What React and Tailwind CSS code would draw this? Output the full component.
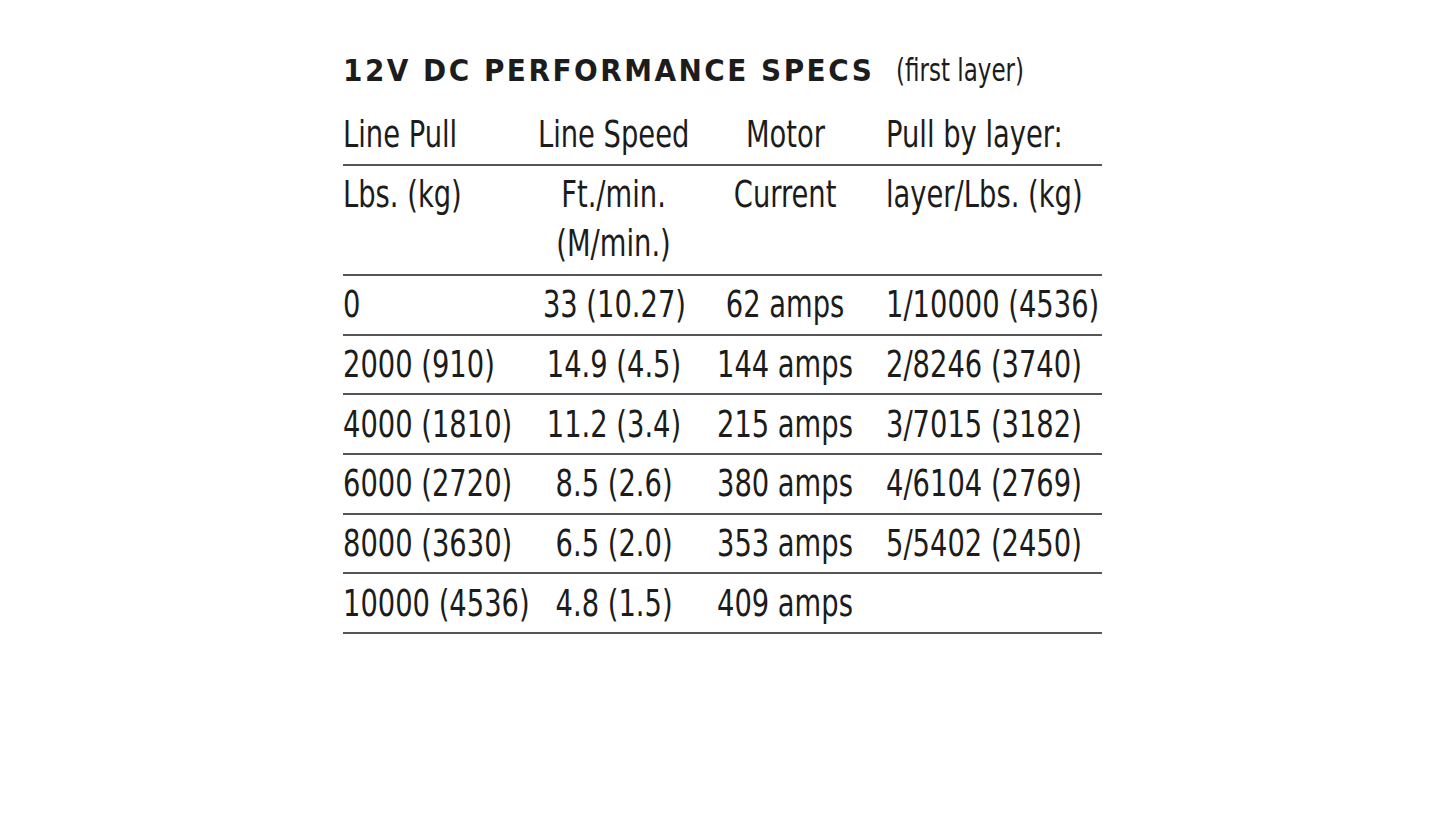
import React from 'react';

const rows = [
  ["0", "33 (10.27)", "62 amps", "1/10000 (4536)"],
  ["2000 (910)", "14.9 (4.5)", "144 amps", "2/8246 (3740)"],
  ["4000 (1810)", "11.2 (3.4)", "215 amps", "3/7015 (3182)"],
  ["6000 (2720)", "8.5 (2.6)", "380 amps", "4/6104 (2769)"],
  ["8000 (3630)", "6.5 (2.0)", "353 amps", "5/5402 (2450)"],
  ["10000 (4536)", "4.8 (1.5)", "409 amps", ""],
];

const cols = "grid grid-cols-[196px_150px_192px_221px]";

// condensed text: squeeze horizontally, since no narrow face is installed
const Left = ({ children }) => (
  <div className="flex whitespace-nowrap">
    <span className="inline-block origin-left scale-x-[0.8]">{children}</span>
  </div>
);

const Center = ({ children }) => (
  <div className="flex justify-center whitespace-nowrap">
    <span className="inline-block origin-center scale-x-[0.8] text-center">{children}</span>
  </div>
);

const App = () => {
  return (
    <div className="min-h-[813px] bg-white text-[#1c1c1c] font-['DejaVu_Sans_Condensed','DejaVu_Sans',sans-serif] [font-stretch:condensed]">
      <div className="mx-auto w-[759px] pt-[54px]">
        <div className="flex items-baseline h-[40px]">
          <h1 className="text-[31px] font-bold tracking-[2.5px] leading-none">12V DC PERFORMANCE SPECS</h1>
          <span className="ml-[22px] text-[32px] leading-none inline-block origin-left scale-x-[0.8]">(first layer)</span>
        </div>

        <div className="mt-[11px] text-[38px] leading-[49px]">
          <div className={`${cols} h-[61px] items-center border-b-2 border-[#555]`}>
            <Left>Line Pull</Left>
            <Center>Line Speed</Center>
            <Center>Motor</Center>
            <div className="pl-[5px]"><Left>Pull by layer:</Left></div>
          </div>
          <div className={`${cols} h-[110px] pt-[4px] border-b-2 border-[#555]`}>
            <Left>Lbs. (kg)</Left>
            <Center>Ft./min.<br />(M/min.)</Center>
            <Center>Current</Center>
            <div className="pl-[5px]"><Left>layer/Lbs. (kg)</Left></div>
          </div>
          {rows.map((r, i) => (
            <div key={i} className={`${cols} h-[59.7px] items-center border-b-2 border-[#555]`}>
              <Left>{r[0]}</Left>
              <Center>{r[1]}</Center>
              <Center>{r[2]}</Center>
              <div className="pl-[5px]"><Left>{r[3]}</Left></div>
            </div>
          ))}
        </div>
      </div>
    </div>
  );
};

export default App;
